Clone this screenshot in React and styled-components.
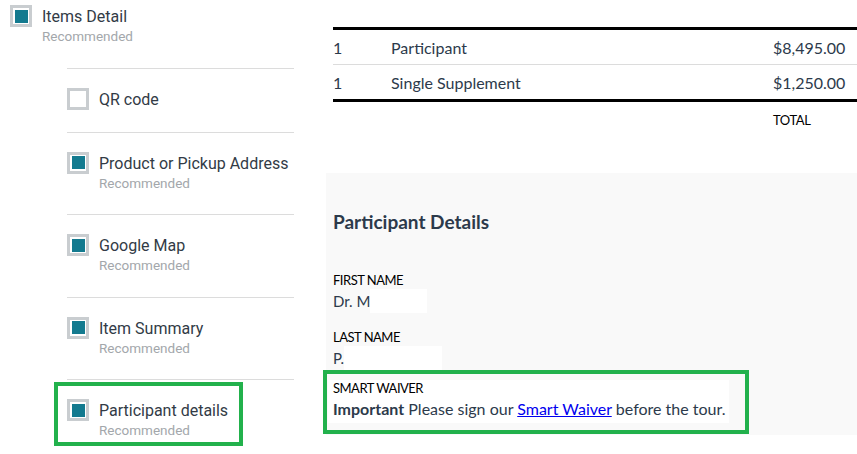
import styled, { createGlobalStyle, css } from "styled-components";

const GlobalStyle = createGlobalStyle`
  html, body {
    margin: 0;
    padding: 0;
    background: #fff;
    overflow: hidden;
  }
  body {
    font-family: Roboto, "Liberation Sans", sans-serif;
  }
`;

const colors = {
  teal: "#137a8f",
  boxBorder: "#c9cdd0",
  text: "#323b46",
  muted: "#a3a7ab",
  divider: "#dcdcdc",
  slate: "#2c3a4b",
  green: "#22b14c",
  panel: "#f9f9f9",
};

const subItems = [
  { title: "QR code", checked: false, recommended: false },
  { title: "Product or Pickup Address", checked: true, recommended: true },
  { title: "Google Map", checked: true, recommended: true },
  { title: "Item Summary", checked: true, recommended: true },
  { title: "Participant details", checked: true, recommended: true, highlight: true },
];

const lineItems = [
  { qty: 1, name: "Participant", price: "$8,495.00" },
  { qty: 1, name: "Single Supplement", price: "$1,250.00" },
];

function Option({ title, checked, recommended }) {
  return (
    <OptionRow>
      <Checkbox checked={checked} />
      <div>
        <OptionTitle>{title}</OptionTitle>
        {recommended && <OptionSub>Recommended</OptionSub>}
      </div>
    </OptionRow>
  );
}

export default function App() {
  return (
    <>
      <GlobalStyle />
      <Page>
        <LeftCol>
          <TopOption>
            <Option title="Items Detail" checked recommended />
          </TopOption>
          <SubList>
            {subItems.map((item) => (
              <SubItem key={item.title} highlight={item.highlight}>
                <Option {...item} />
              </SubItem>
            ))}
          </SubList>
        </LeftCol>

        <RightCol>
          <Table>
            {lineItems.map((row, i) => (
              <Row key={row.name} last={i === lineItems.length - 1}>
                <Cell>{row.qty}</Cell>
                <Cell>{row.name}</Cell>
                <Cell>{row.price}</Cell>
              </Row>
            ))}
            <TotalRow>
              <span />
              <span />
              <TotalLabel>TOTAL</TotalLabel>
            </TotalRow>
          </Table>

          <Panel>
            <PanelTitle>Participant Details</PanelTitle>
            <Field>
              <FieldLabel>FIRST NAME</FieldLabel>
              <FieldValue>
                Dr. M<Redacted width={57} />
              </FieldValue>
            </Field>
            <Field>
              <FieldLabel>LAST NAME</FieldLabel>
              <FieldValue>
                P.<Redacted width={98} />
              </FieldValue>
            </Field>
            <Waiver>
              <FieldLabel>SMART WAIVER</FieldLabel>
              <WaiverText>
                <strong>Important</strong> Please sign our{" "}
                <a href="#waiver">Smart Waiver</a> before the tour.
              </WaiverText>
            </Waiver>
          </Panel>
        </RightCol>
      </Page>
    </>
  );
}

const Page = styled.div`
  display: flex;
  width: 857px;
  height: 454px;
`;

const LeftCol = styled.div`
  width: 325px;
  flex-shrink: 0;
`;

const TopOption = styled.div`
  padding: 5px 0 0 10px;
`;

const OptionRow = styled.div`
  display: flex;
  align-items: flex-start;
  gap: 10px;
`;

const Checkbox = styled.span`
  width: 22px;
  height: 22px;
  box-sizing: border-box;
  border: 3px solid ${colors.boxBorder};
  padding: 1.5px;
  flex-shrink: 0;
  background: #fff;
  background-clip: content-box;
  ${(p) =>
    p.checked &&
    css`
      background: ${colors.teal};
      background-clip: content-box;
    `}
`;

const OptionTitle = styled.div`
  margin-top: 1px;
  font-size: 16px;
  line-height: 22px;
  color: ${colors.text};
`;

const OptionSub = styled.div`
  font-size: 13.5px;
  line-height: 16px;
  padding-bottom: 2.5px;
  color: ${colors.muted};
`;

const SubList = styled.div`
  margin: 21px 0 0 67px;
  width: 227px;
`;

const SubItem = styled.div`
  position: relative;
  border-top: 1px solid ${colors.divider};
  padding: 19px 0 21px;

  ${(p) =>
    p.highlight &&
    css`
      &::after {
        content: "";
        position: absolute;
        left: -13px;
        top: 2px;
        width: 189px;
        height: 64px;
        box-sizing: border-box;
        border: 4px solid ${colors.green};
      }
    `}
`;

const RightCol = styled.div`
  flex: 1;
  font-family: Lato, "Liberation Sans", sans-serif;
  color: ${colors.slate};
`;

const Table = styled.div`
  margin: 27px 0 0 8px;
  border-top: 3px solid #000;
`;

const Row = styled.div`
  display: grid;
  grid-template-columns: 58px 1fr 84px;
  align-items: center;
  height: 34px;
  font-size: 16px;
  border-bottom: ${(p) => (p.last ? "3px solid #000" : `1px solid ${colors.divider}`)};
`;

const Cell = styled.span``;

const TotalRow = styled(Row)`
  height: 36px;
  border-bottom: none;
`;

const TotalLabel = styled.span`
  font-size: 13px;
  color: #000;
  letter-spacing: -0.4px;
`;

const Panel = styled.div`
  margin: 35px 0 0 1px;
  padding: 38px 0 12px 7px;
  background: ${colors.panel};
`;

const PanelTitle = styled.h2`
  margin: 0 0 39px;
  font-size: 19px;
  line-height: 22px;
  font-weight: 700;
  color: ${colors.slate};
`;

const Field = styled.div`
  margin-bottom: 16px;
`;

const FieldLabel = styled.div`
  font-size: 13px;
  line-height: 16px;
  color: #000;
  letter-spacing: -0.5px;
`;

const FieldValue = styled.div`
  display: flex;
  align-items: stretch;
  margin-top: 1px;
  font-size: 15px;
  line-height: 24px;
`;

const Redacted = styled.span`
  display: inline-block;
  width: ${(p) => p.width}px;
  background: #fff;
`;

const Waiver = styled.div`
  position: relative;
  width: fit-content;
  margin: -6px 0 0 -5px;
  padding: 0 4px 1px 5px;
  background: #fff;

  &::after {
    content: "";
    position: absolute;
    left: -5px;
    right: -20px;
    top: -10px;
    bottom: -11px;
    border: 4px solid ${colors.green};
  }
`;

const WaiverText = styled.div`
  font-size: 16px;
  line-height: 26px;

  strong {
    font-weight: 700;
  }

  a {
    color: #0000ee;
  }
`;
